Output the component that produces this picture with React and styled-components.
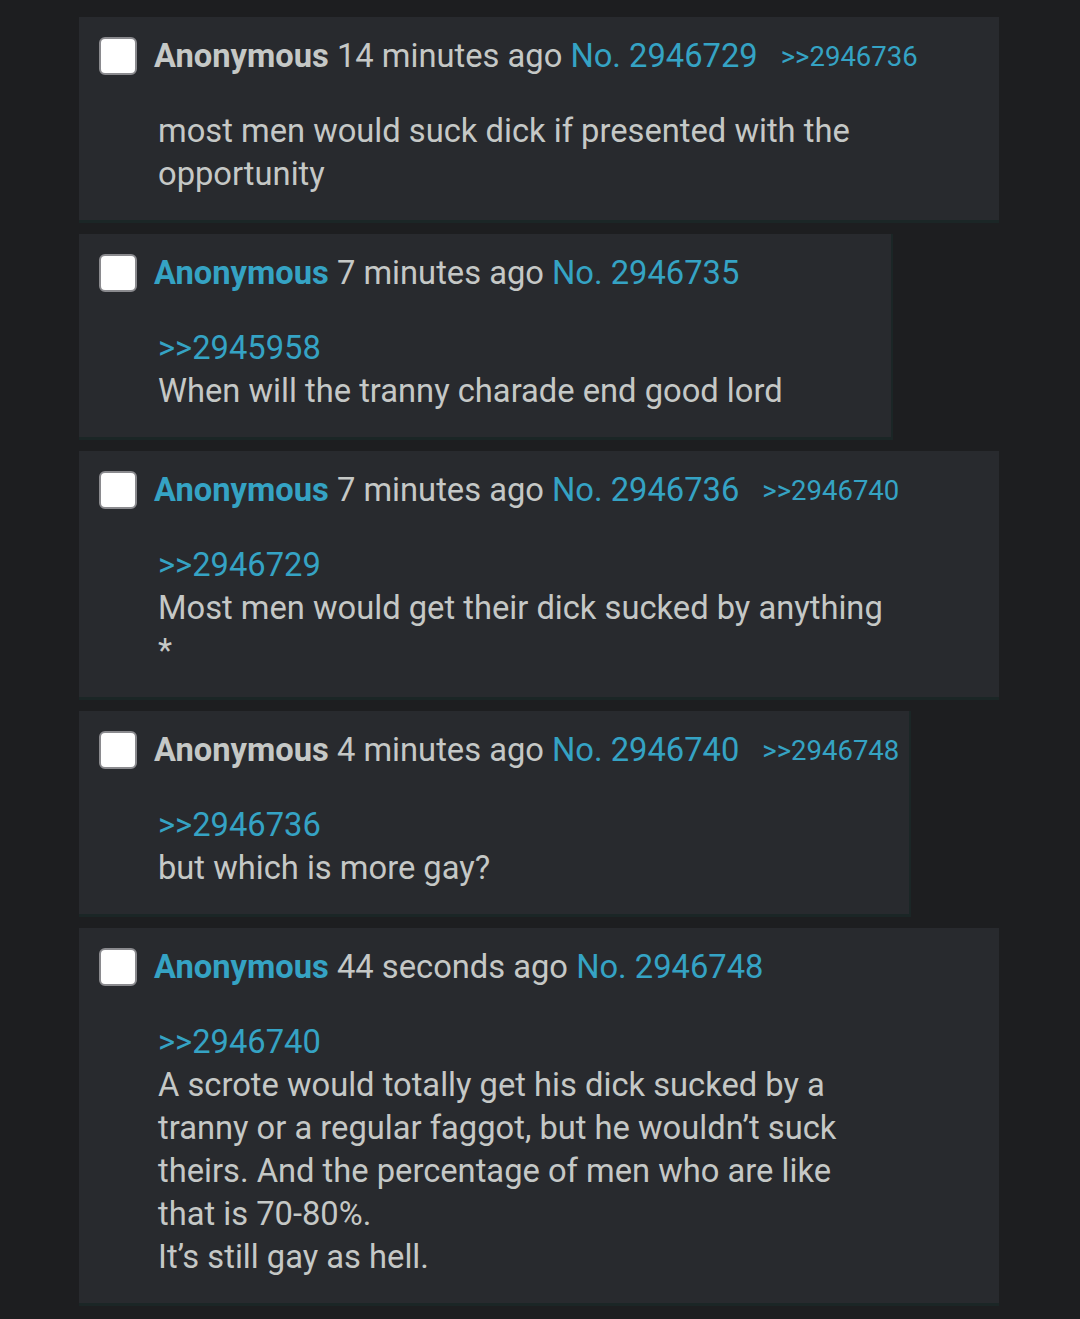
import React from "react";
import styled, { createGlobalStyle } from "styled-components";

const Global = createGlobalStyle`
  html, body { margin: 0; padding: 0; background: #1d1e20; }
  body { font-family: Roboto, "Noto Sans", sans-serif; color: #c5c8c6; }
`;

const Page = styled.div`
  min-height: 1319px;
  padding: 17px 0 0 79px;
  box-sizing: border-box;
  display: flex;
  flex-direction: column;
  align-items: flex-start;
  gap: 11px;
`;

const Post = styled.div`
  background: #282a2e;
  box-sizing: border-box;
  max-width: 920px;
  width: ${(p) => (p.$full ? "920px" : "fit-content")};
  padding: 20px 10px 24px 20px;
  border-bottom: 3px solid #1b2626;
  border-right: ${(p) => (p.$full ? "none" : "2px solid #1b2626")};
`;

const Header = styled.div`
  display: flex;
  align-items: center;
  height: 38px;
  font-size: 32.7px;
  white-space: pre;
`;

const Check = styled.span`
  width: 38px;
  height: 38px;
  box-sizing: border-box;
  background: #fff;
  border: 2px solid #8a8a8e;
  border-radius: 6px;
  margin-right: 17px;
  flex: none;
`;

const Name = styled.span`
  font-weight: 700;
  color: ${(p) => (p.$blue ? "#35a3c4" : "#c5c8c6")};
`;

const Meta = styled.span`
  color: #c5c8c6;
`;

const PostNo = styled.span`
  color: #35a3c4;
`;

const ReplyLink = styled.span`
  color: #35a3c4;
  font-size: 27.5px;
  margin-left: 23px;
`;

const Body = styled.div`
  margin: 35px 98px 0 59px;
  font-size: 32.7px;
  line-height: 43px;
  white-space: pre-wrap;
`;

const Quote = styled.div`
  color: #35a3c4;
`;

const posts = [
  {
    full: true,
    blue: false,
    time: "14 minutes ago",
    no: "2946729",
    reply: ">>2946736",
    text: "most men would suck dick if presented with the opportunity",
  },
  {
    full: false,
    blue: true,
    time: "7 minutes ago",
    no: "2946735",
    quote: ">>2945958",
    text: "When will the tranny charade end good lord",
  },
  {
    full: true,
    blue: true,
    time: "7 minutes ago",
    no: "2946736",
    reply: ">>2946740",
    quote: ">>2946729",
    text: "Most men would get their dick sucked by anything\n*",
  },
  {
    full: false,
    blue: false,
    time: "4 minutes ago",
    no: "2946740",
    reply: ">>2946748",
    quote: ">>2946736",
    text: "but which is more gay?",
  },
  {
    full: true,
    blue: true,
    time: "44 seconds ago",
    no: "2946748",
    quote: ">>2946740",
    text:
      "A scrote would totally get his dick sucked by a tranny or a regular faggot, but he wouldn\u2019t suck theirs. And the percentage of men who are like that is 70-80%.\nIt\u2019s still gay as hell.",
  },
];

export default function App() {
  return (
    <>
      <Global />
      <Page>
        {posts.map((p) => (
          <Post key={p.no} $full={p.full}>
            <Header>
              <Check />
              <Name $blue={p.blue}>Anonymous</Name>
              <Meta>{` ${p.time} `}</Meta>
              <PostNo>No. {p.no}</PostNo>
              {p.reply && <ReplyLink>{p.reply}</ReplyLink>}
            </Header>
            <Body>
              {p.quote && <Quote>{p.quote}</Quote>}
              {p.text}
            </Body>
          </Post>
        ))}
      </Page>
    </>
  );
}
